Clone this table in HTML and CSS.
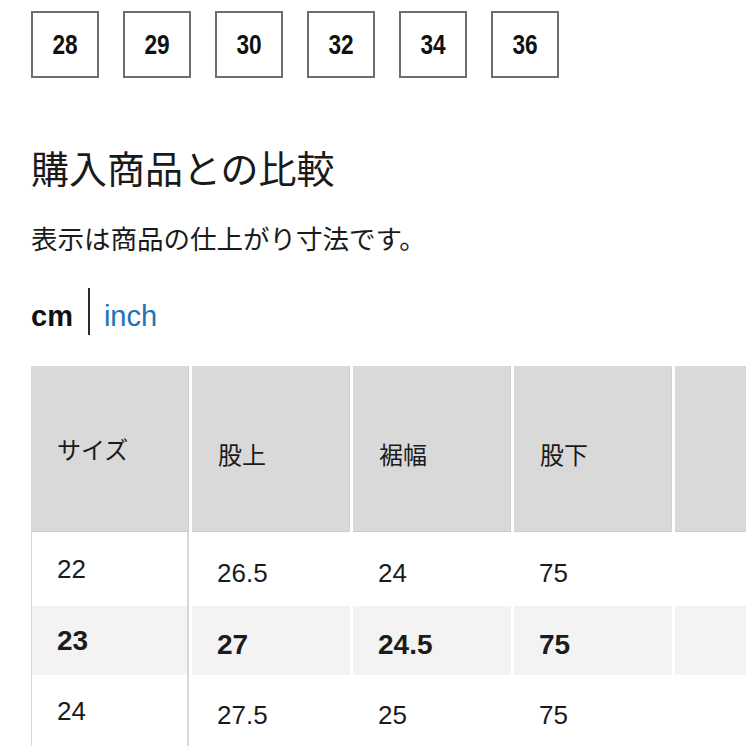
FILE: index.html
```html
<!DOCTYPE html>
<html lang="ja">
<head>
<meta charset="utf-8">
<link rel="stylesheet" href="styles.css">
</head>
<body>
<div class="page">
  <div class="sizes">
    <div class="size"><span>28</span></div>
    <div class="size"><span>29</span></div>
    <div class="size"><span>30</span></div>
    <div class="size"><span>32</span></div>
    <div class="size"><span>34</span></div>
    <div class="size"><span>36</span></div>
  </div>
  <h2 class="title">購入商品との比較</h2>
  <p class="note">表示は商品の仕上がり寸法です。</p>
  <div class="units">
    <span class="unit active">cm</span>
    <span class="divider"></span>
    <span class="unit link">inch</span>
  </div>
  <div class="table">
    <div class="row head">
      <div class="cell first">サイズ</div>
      <div class="cell">股上</div>
      <div class="cell">裾幅</div>
      <div class="cell">股下</div>
      <div class="cell"></div>
    </div>
    <div class="row body r1">
      <div class="cell first">22</div>
      <div class="cell">26.5</div>
      <div class="cell">24</div>
      <div class="cell">75</div>
      <div class="cell"></div>
    </div>
    <div class="row body r2 current">
      <div class="cell first">23</div>
      <div class="cell">27</div>
      <div class="cell">24.5</div>
      <div class="cell">75</div>
      <div class="cell"></div>
    </div>
    <div class="row body r3">
      <div class="cell first">24</div>
      <div class="cell">27.5</div>
      <div class="cell">25</div>
      <div class="cell">75</div>
      <div class="cell"></div>
    </div>
  </div>
</div>
</body>
</html>
```

FILE: styles.css
```css
html, body {
  margin: 0;
  padding: 0;
  background: #ffffff;
  overflow: hidden;
}
body {
  width: 746px;
  height: 746px;
  color: #1b1b1b;
  font-family: "Liberation Sans", "Noto Sans CJK JP", sans-serif;
}
.page {
  padding: 11px 0 0 31px;
}
.sizes {
  display: flex;
  gap: 24px;
}
.size {
  box-sizing: border-box;
  width: 68px;
  height: 67px;
  border: 2px solid #6e6e6e;
  display: flex;
  align-items: center;
  justify-content: center;
}
.size span {
  font-family: "Liberation Sans", sans-serif;
  font-weight: 700;
  font-size: 27px;
  line-height: 27px;
  color: #111;
  display: inline-block;
  padding-top: 2px;
  transform: scaleX(0.84);
}
.title {
  margin: 67px 0 0 0;
  font-family: "Noto Sans CJK JP", sans-serif;
  font-weight: 400;
  font-size: 38px;
  line-height: 44px;
  color: #1a1a1a;
}
.note {
  margin: 33px 0 0 0;
  font-family: "Noto Sans CJK JP", sans-serif;
  font-size: 26.5px;
  line-height: 32px;
  color: #1a1a1a;
}
.units {
  margin-top: 34px;
  height: 47px;
  display: flex;
  align-items: center;
}
.unit {
  font-size: 29px;
  line-height: 32px;
  padding-top: 8px;
}
.unit.active {
  font-weight: 700;
  color: #111;
}
.unit.link {
  color: #2370b4;
}
.divider {
  width: 2px;
  height: 47px;
  background: #2a2a2a;
  margin: 0 14px 0 15px;
}
.table {
  margin-top: 31px;
  width: 715px;
  overflow: hidden;
}
.row {
  display: grid;
  grid-template-columns: repeat(5, 158px);
  column-gap: 3px;
}
.cell {
  box-sizing: border-box;
  padding-left: 26px;
  display: flex;
  align-items: center;
}
.head .cell {
  height: 166px;
  background: #d9d9d9;
  border-right: 1px solid #cfcfcf;
  border-bottom: 1px solid #cdcdcd;
  font-family: "Noto Sans CJK JP", sans-serif;
  font-size: 24px;
  padding-top: 10px;
}
.head .cell.first {
  padding-top: 0;
}
.body .cell {
  font-size: 26px;
  padding-top: 8px;
  padding-left: 25px;
}
.body .cell.first {
  padding-top: 0;
  border-left: 1px solid #d8d8d8;
  border-right: 2px solid #d8d8d8;
}
.r1 .cell { height: 74px; }
.r2 .cell { height: 69px; background: #f3f3f3; font-weight: 700; font-size: 28px; }
.r3 .cell { height: 72px; }
```
